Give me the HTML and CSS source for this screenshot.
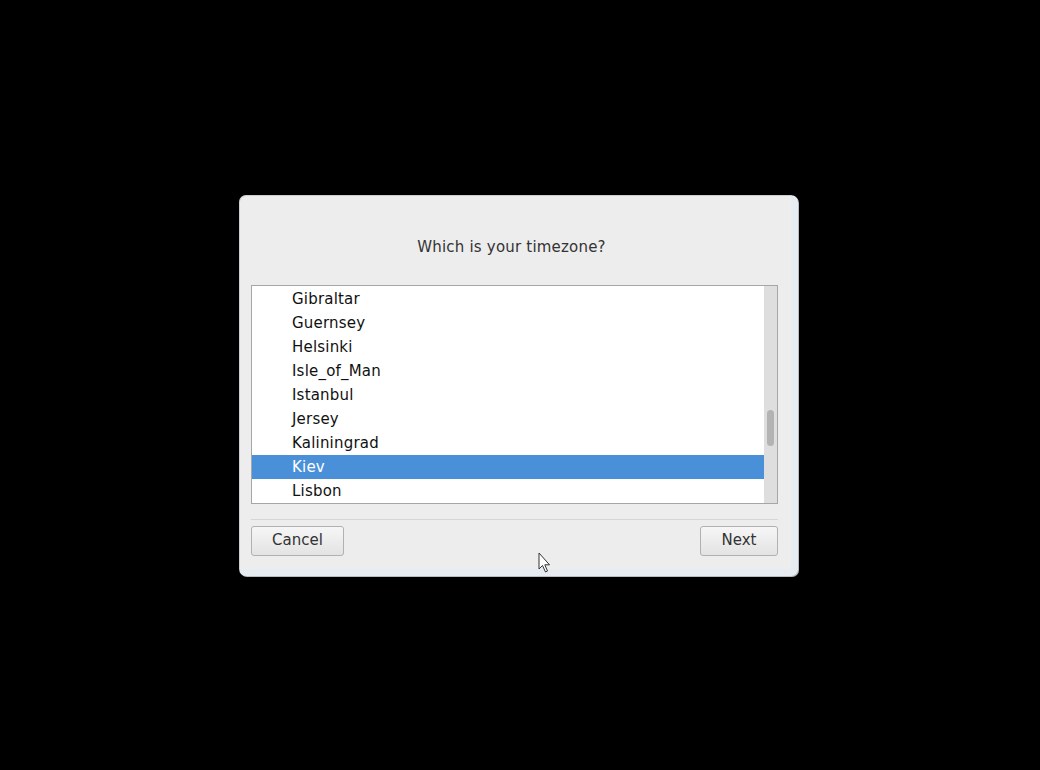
FILE: index.html
```html
<!DOCTYPE html>
<html lang="en">
<head>
    <meta charset="UTF-8">
    <title>Timezone</title>
    <link rel="stylesheet" href="styles.css">
</head>
<body>
    <div class="dialog">
        <h1 class="title">Which is your timezone?</h1>
        <div class="list">
            <ul class="items">
                <li>Gibraltar</li>
                <li>Guernsey</li>
                <li>Helsinki</li>
                <li>Isle_of_Man</li>
                <li>Istanbul</li>
                <li>Jersey</li>
                <li>Kaliningrad</li>
                <li class="selected">Kiev</li>
                <li>Lisbon</li>
            </ul>
            <div class="scrollbar"><div class="thumb"></div></div>
        </div>
        <div class="footer">
            <button class="btn btn-cancel">Cancel</button>
            <button class="btn btn-next">Next</button>
        </div>
    </div>
    <svg class="cursor" width="14" height="22" viewBox="0 0 14 22">
        <path d="M1 1 L1 17 L4.5 13.5 L7.5 20 L9.5 19 L6.8 12.8 L11.5 12.8 Z" fill="#fff" stroke="#333" stroke-width="1" stroke-linejoin="round"/>
    </svg>
</body>
</html>
```

FILE: styles.css
```css
body {
    margin: 0;
    background: #000;
    font-family: "DejaVu Sans", sans-serif;
    height: 770px;
    padding: 195px 0 0 239px;
    box-sizing: border-box;
}

.dialog {
    width: 559px;
    height: 381px;
    box-sizing: border-box;
    background: #ededed;
    border: 1px solid #c9ced3;
    border-right: 7px solid #e6ecf1;
    border-bottom: 7px solid #e6ecf1;
    border-radius: 7px;
    box-shadow: 1px 1px 0 #b7bcc1;
    padding: 0 13px 0 11px;
    display: flex;
    flex-direction: column;
}

.title {
    margin: 0;
    padding: 41px 6px 27px 0;
    font-size: 15px;
    font-weight: normal;
    line-height: 21px;
    text-align: center;
    color: #333;
    letter-spacing: 0.2px;
}

.list {
    height: 219px;
    box-sizing: border-box;
    border: 1px solid #a6a6a6;
    background: #fff;
    display: flex;
}

.items {
    list-style: none;
    margin: 0;
    padding: 1px 0 0;
    flex: 1;
    overflow: hidden;
}

.items li {
    height: 24px;
    line-height: 24px;
    padding-left: 40px;
    font-size: 15px;
    letter-spacing: 0.2px;
    color: #111;
}

.items li.selected {
    background: #4a90d9;
    color: #fff;
}

.scrollbar {
    width: 13px;
    background: #dedede;
    position: relative;
}

.thumb {
    position: absolute;
    left: 3px;
    top: 124px;
    width: 7px;
    height: 36px;
    border-radius: 4px;
    background: #b3b3b3;
}

.footer {
    margin-top: 15px;
    border-top: 1px solid #d6d6d6;
    padding-top: 6px;
    display: flex;
    justify-content: space-between;
}

.btn {
    height: 30px;
    box-sizing: border-box;
    border: 1px solid #b1b1b1;
    border-radius: 3px;
    background: linear-gradient(#f6f6f6, #e3e3e3);
    font-family: "DejaVu Sans", sans-serif;
    font-size: 15px;
    line-height: 24px;
    color: #333;
    padding: 0 0 3px;
}

.btn-cancel {
    width: 93px;
}

.btn-next {
    width: 78px;
}

.cursor {
    position: absolute;
    left: 538px;
    top: 552px;
}
```
